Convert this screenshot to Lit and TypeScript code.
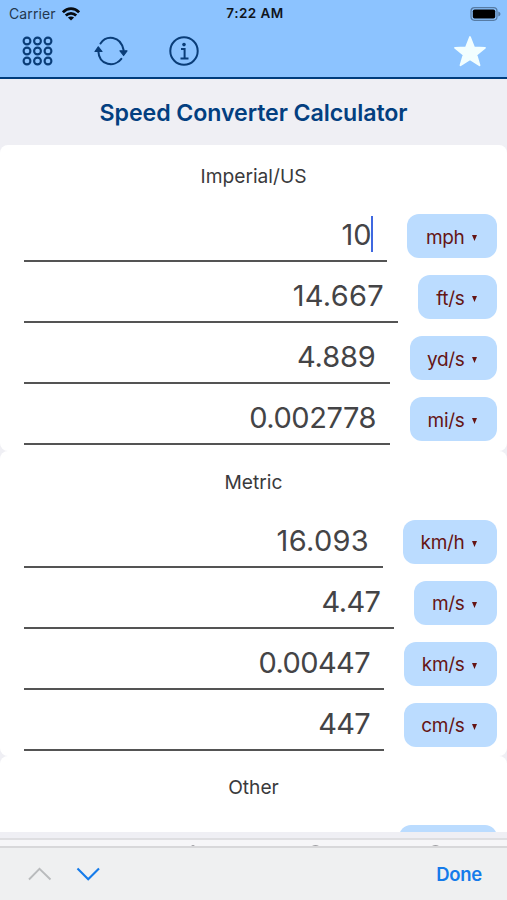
import { LitElement, html, css, svg } from "lit";
import { customElement } from "lit/decorators.js";
import { styleMap } from "lit/directives/style-map.js";

interface Row {
  value: string;
  unit: string;
  width: number;
  tracking?: number;
  active?: boolean;
}

interface Section {
  title: string;
  rows: Row[];
}

const SECTIONS: Section[] = [
  {
    title: "Imperial/US",
    rows: [
      { value: "10", unit: "mph", width: 90, active: true },
      { value: "14.667", unit: "ft/s", width: 79, tracking: 0.3 },
      { value: "4.889", unit: "yd/s", width: 87.3, tracking: -0.1 },
      { value: "0.002778", unit: "mi/s", width: 87, tracking: -0.45 },
    ],
  },
  {
    title: "Metric",
    rows: [
      { value: "16.093", unit: "km/h", width: 94, tracking: 0.3 },
      { value: "4.47", unit: "m/s", width: 82.6, tracking: -0.6 },
      { value: "0.00447", unit: "km/s", width: 93, tracking: -0.6 },
      { value: "447", unit: "cm/s", width: 93, tracking: -0.7 },
    ],
  },
  { title: "Other", rows: [{ value: "", unit: "", width: 98 }] },
];

@customElement("app-root")
export class AppRoot extends LitElement {
  static styles = css`
    :host {
      display: flex;
      flex-direction: column;
      position: relative;
      width: 507px;
      height: 900px;
      overflow: hidden;
      background: #efeff4;
      font-family: Inter, "Liberation Sans", sans-serif;
      color: #3a3a3c;
    }
    * { box-sizing: border-box; }
    svg { display: block; flex: none; }
    .header {
      flex: none;
      height: 79px;
      background: #8cc3ff;
      border-bottom: 2px solid #003c7c;
    }
    .status {
      display: grid;
      grid-template-columns: 1fr auto 1fr;
      align-items: center;
      height: 27px;
      padding: 0 6px 0 9px;
      color: #10151c;
      font-size: 14px;
      line-height: 27px;
    }
    .carrier { display: flex; align-items: center; gap: 6px; color: #24384f; letter-spacing: 0.1px; }
    .time { font-weight: 600; font-size: 13.5px; letter-spacing: 0.45px; }
    .battery { justify-self: end; }
    .tools {
      display: flex;
      align-items: center;
      height: 48px;
      padding: 0 20px 0 22px;
    }
    .refresh { margin-left: 41px; }
    .info { margin-left: 41px; }
    .star { margin: -1px 0 0 auto; }
    .title {
      flex: none;
      height: 66px;
      margin: 0;
      text-align: center;
      font-size: 23.2px;
      line-height: 68px;
      font-weight: 600;
      color: #033f80;
      letter-spacing: -0.1px;
    }
    .content { flex: none; height: 687px; overflow: hidden; }
    .card {
      height: 305.5px;
      background: #fff;
      border-radius: 8px;
    }
    .card-title {
      height: 69px;
      margin: 0;
      text-align: center;
      font-size: 19.2px;
      line-height: 62px;
      font-weight: 400;
    }
    .row {
      display: flex;
      gap: 20px;
      height: 61.1px;
      padding: 0 10px 0 24px;
    }
    .field {
      flex: 1;
      display: flex;
      justify-content: flex-end;
      height: 48px;
      padding-right: 14px;
      border-bottom: 2px solid #545454;
      font-size: 29px;
      line-height: 41px;
      color: #444446;
    }
    .caret { width: 2px; height: 36px; margin: 2px 0 0 -0.5px; background: #3f68e0; }
    .unit {
      display: flex;
      justify-content: flex-end;
      align-items: center;
      gap: 7.5px;
      height: 44px;
      padding: 2px 20px 0 0;
      border-radius: 12px;
      background: #bbdcff;
      color: #651414;
      font-size: 19px;
      letter-spacing: -0.3px;
    }
    .unit svg { margin-top: 2px; }
    .strip {
      flex: none;
      display: flex;
      align-items: flex-end;
      height: 10px;
      margin-top: 6px;
      border-top: 2px solid #dedee1;
      border-bottom: 2px solid #d8d8da;
      background: #f6f6f8;
    }
    .accessory {
      flex: 1;
      display: flex;
      align-items: center;
      padding: 0 25px 0 28px;
      background: #eff0f1;
    }
    .next { margin-left: 24px; }
    .done {
      margin-left: auto;
      font-size: 18.5px;
      font-weight: 600;
      letter-spacing: -0.3px;
      color: #157bea;
    }
  `;

  private renderRow(row: Row) {
    return html`
      <div class="row">
        <div class="field">
          <span style=${styleMap({ letterSpacing: `${row.tracking ?? 0}px` })}>${row.value}</span
          >${row.active ? html`<span class="caret"></span>` : ""}
        </div>
        <div class="unit" style=${styleMap({ width: `${row.width}px` })}>
          <span>${row.unit}</span>
          <svg width="5" height="6" viewBox="0 0 5 6"><path d="M0 0h5L2.5 6z" fill="#651414" /></svg>
        </div>
      </div>
    `;
  }

  render() {
    const dots = [5, 15.5, 26].flatMap((x) =>
      [5, 15, 25].map((y) => svg`<circle cx=${x} cy=${y} r="3.4" />`)
    );
    return html`
      <div class="header">
        <div class="status">
          <div class="carrier">
            <span>Carrier</span>
            <svg width="18" height="14" viewBox="0 0 18 14" fill="none" stroke="#070b10" stroke-width="2.8">
              <path d="M0.9 5.3C5.6.5 12.4.5 17.1 5.3M3.8 8.6c3-2.9 7.4-2.9 10.4 0" />
              <path d="M9 13.5 5.9 10.6c1.8-1.5 4.4-1.5 6.2 0z" fill="#070b10" stroke="none" />
            </svg>
          </div>
          <div class="time">7:22 AM</div>
          <svg class="battery" width="31" height="14" viewBox="0 0 31 14">
            <rect x="1" y="0.7" width="26" height="12.6" rx="3.5" fill="none" stroke="#567ba4" stroke-width="1.2" />
            <rect x="2.8" y="2.4" width="22.4" height="9.2" rx="1.8" fill="#000" />
            <path d="M28.3 4.6q2.2.6 2.2 2.4t-2.2 2.4z" fill="#567ba4" />
          </svg>
        </div>
        <div class="tools">
          <svg width="31" height="30" viewBox="0 0 31 30" fill="none" stroke="#0a3d78" stroke-width="2.1">${dots}</svg>
          <svg class="refresh" width="34" height="30" viewBox="0 0 34 30" fill="none" stroke="#0a3d78" stroke-width="2" stroke-linecap="round">
            <path d="M6.5 7.5C12-1 26.500-1 29.600 14M27.300 22.800C21 31.500 5 30 4.300 15" />
            <path d="M26 14.800h7L29.600 19.500zM1 15.500h7L4.300 10.800z" fill="#0a3d78" stroke-width="1.200" stroke-linejoin="round" />
          </svg>
          <svg class="info" width="30" height="30" viewBox="0 0 30 30" fill="none" stroke="#0a3d78" stroke-width="2">
            <circle cx="15" cy="15" r="13.700" />
            <path d="M12 13h3.600v9.300M11.500 22.400h8" />
            <circle cx="15" cy="8.600" r="1.800" fill="#0a3d78" stroke="none" />
          </svg>
          <svg class="star" width="34" height="32" viewBox="0 0 34 32">
            <path d="M17 2 21 12.400 32 12.800 23.400 19.700 26.500 30.300 17 24.300 7.500 30.300 10.600 19.700 2 12.800 13 12.400z" fill="#f2feff" stroke="#f2feff" stroke-width="1.800" stroke-linejoin="round" />
          </svg>
        </div>
      </div>
      <h1 class="title">Speed Converter Calculator</h1>
      <div class="content">
        ${SECTIONS.map(
          (section) => html`
            <div class="card">
              <h2 class="card-title">${section.title}</h2>
              ${section.rows.map((row) =>
                row.unit
                  ? this.renderRow(row)
                  : html`<div class="row">
                      <div class="field"></div>
                      <div class="unit" style=${styleMap({ width: `${row.width}px` })}></div>
                    </div>`
              )}
            </div>
          `
        )}
      </div>
      <div class="strip">
        <svg width="507" height="2" viewBox="0 0 507 2" fill="#a2a2a6">
          <path d="M191 2l1.500-1h1L195 2zM312 2q3.500-1.800 7 0zM432 2q3.500-1.800 7 0z" />
        </svg>
      </div>
      <div class="accessory">
        <svg width="24" height="14" viewBox="0 0 24 14" fill="none" stroke="#b9bbbd" stroke-width="1.900">
          <path d="M1 12.500 11.500 1.800 22.500 12.500" />
        </svg>
        <svg class="next" width="24" height="14" viewBox="0 0 24 14" fill="none" stroke="#157bea" stroke-width="2.100">
          <path d="M1.500 1.500 12.200 12.300 23 1.500" />
        </svg>
        <div class="done">Done</div>
      </div>
    `;
  }
}
